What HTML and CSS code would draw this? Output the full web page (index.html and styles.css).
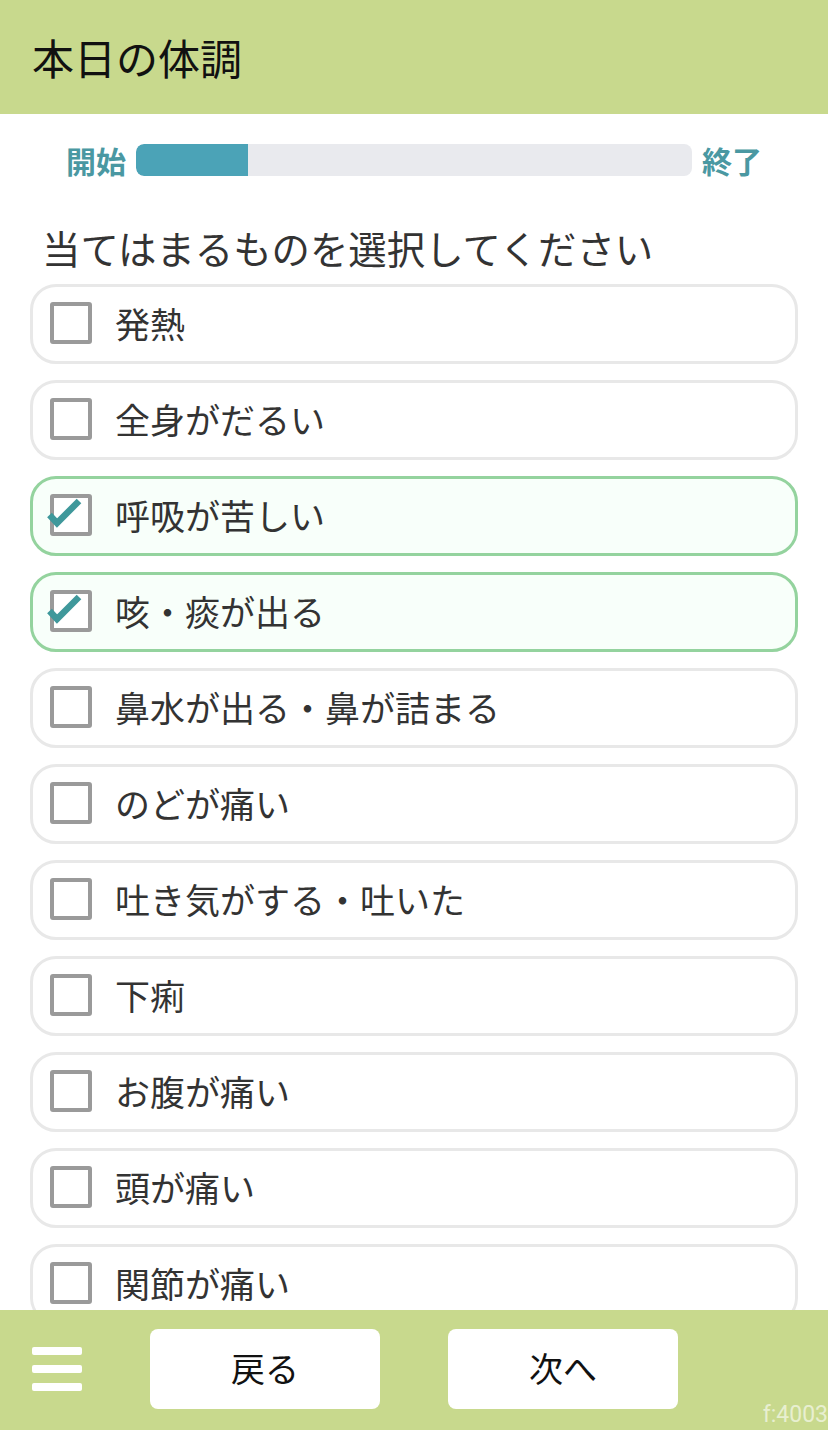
FILE: index.html
```html
<!DOCTYPE html>
<html lang="ja">
<head>
<meta charset="utf-8">
<title>本日の体調</title>
<link rel="stylesheet" href="styles.css">
</head>
<body>
<div class="app">
  <header class="header">
    <h1 class="title">本日の体調</h1>
  </header>
  <main class="main">
    <div class="progress">
      <span class="progress-label">開始</span>
      <div class="progress-track"><div class="progress-fill" style="width: 112px"></div></div>
      <span class="progress-label">終了</span>
    </div>
    <p class="question">当てはまるものを選択してください</p>
    <ul class="options">
      <li class="option"><span class="checkbox"></span><span class="option-text">発熱</span></li>
      <li class="option"><span class="checkbox"></span><span class="option-text">全身がだるい</span></li>
      <li class="option checked"><span class="checkbox"><svg class="check" viewBox="0 0 36 32" width="36" height="32"><polyline points="1.5,17 9,25 31,3" /></svg></span><span class="option-text">呼吸が苦しい</span></li>
      <li class="option checked"><span class="checkbox"><svg class="check" viewBox="0 0 36 32" width="36" height="32"><polyline points="1.5,17 9,25 31,3" /></svg></span><span class="option-text">咳・痰が出る</span></li>
      <li class="option"><span class="checkbox"></span><span class="option-text">鼻水が出る・鼻が詰まる</span></li>
      <li class="option"><span class="checkbox"></span><span class="option-text">のどが痛い</span></li>
      <li class="option"><span class="checkbox"></span><span class="option-text">吐き気がする・吐いた</span></li>
      <li class="option"><span class="checkbox"></span><span class="option-text">下痢</span></li>
      <li class="option"><span class="checkbox"></span><span class="option-text">お腹が痛い</span></li>
      <li class="option"><span class="checkbox"></span><span class="option-text">頭が痛い</span></li>
      <li class="option"><span class="checkbox"></span><span class="option-text">関節が痛い</span></li>
    </ul>
  </main>
  <footer class="footer">
    <div class="menu" aria-label="メニュー">
      <span class="menu-bar"></span>
      <span class="menu-bar"></span>
      <span class="menu-bar"></span>
    </div>
    <button class="nav-btn">戻る</button>
    <button class="nav-btn">次へ</button>
    <span class="form-id">f:4003</span>
  </footer>
</div>
</body>
</html>
```

FILE: styles.css
```css
* {
  box-sizing: border-box;
}

html, body {
  margin: 0;
  padding: 0;
}

body {
  font-family: "Noto Sans CJK JP", "Noto Sans", sans-serif;
  background: #ffffff;
  color: #333333;
}

.app {
  width: 828px;
  height: 1430px;
  display: flex;
  flex-direction: column;
  overflow: hidden;
}

.header {
  height: 114px;
  flex: 0 0 114px;
  background: #c8d98d;
  display: flex;
  align-items: center;
  padding-left: 32px;
}

.title {
  margin: 0;
  font-size: 42px;
  font-weight: 400;
  color: #111111;
  line-height: 1;
}

.main {
  flex: 1 1 auto;
  min-height: 0;
  overflow: hidden;
}

.progress {
  margin-top: 30px;
  display: flex;
  justify-content: center;
  align-items: center;
  gap: 10px;
  height: 32px;
}

.progress-label {
  font-size: 30px;
  font-weight: 700;
  line-height: 32px;
  color: #4a98a2;
}

.progress-track {
  width: 556px;
  height: 32px;
  background: #e9eaee;
  border-radius: 8px;
  overflow: hidden;
}

.progress-fill {
  height: 100%;
  background: #4ba3b7;
  border-radius: 8px 0 0 8px;
}

.question {
  margin: 46px 0 0 42px;
  font-size: 38.4px;
  line-height: 50px;
  color: #333333;
}

.options {
  list-style: none;
  margin: 12px 0 0;
  padding: 0 30px;
  display: flex;
  flex-direction: column;
  gap: 16px;
}

.option {
  height: 80px;
  flex: 0 0 80px;
  border: 3px solid #e8e8e8;
  border-radius: 26px;
  background: #ffffff;
  display: flex;
  align-items: center;
  padding-left: 17px;
  gap: 23px;
}

.option.checked {
  border-color: #94d39e;
  background: #f8fffa;
}

.checkbox {
  position: relative;
  width: 42px;
  height: 42px;
  flex: 0 0 42px;
  border: 4px solid #9a9a9a;
  border-radius: 3px;
  background: #ffffff;
  margin-top: -2px;
}

.check {
  position: absolute;
  left: -6px;
  top: 0px;
  overflow: visible;
}

.check polyline {
  fill: none;
  stroke: #3f989b;
  stroke-width: 6.5;
  stroke-linecap: butt;
  stroke-linejoin: miter;
}

.option-text {
  font-size: 35px;
  line-height: 1;
  color: #333333;
  margin-top: -4px;
}

.footer {
  position: relative;
  height: 120px;
  flex: 0 0 120px;
  background: #c8d98d;
  display: flex;
  align-items: center;
  padding-left: 32px;
  gap: 68px;
}

.menu {
  width: 50px;
  display: flex;
  flex-direction: column;
  gap: 10px;
  margin-top: -2px;
}

.menu-bar {
  display: block;
  height: 8px;
  background: #ffffff;
  border-radius: 2px;
}

.nav-btn {
  width: 230px;
  height: 80px;
  border: none;
  border-radius: 8px;
  background: #ffffff;
  font-family: "Noto Sans CJK JP", "Noto Sans", sans-serif;
  font-size: 34px;
  color: #111111;
  padding: 0 0 4px;
  margin-top: -2px;
}

.form-id {
  position: absolute;
  right: 0;
  bottom: 2px;
  font-family: Roboto, "Noto Sans", sans-serif;
  font-size: 23px;
  line-height: 26px;
  color: rgba(255, 255, 255, 0.6);
}
```
